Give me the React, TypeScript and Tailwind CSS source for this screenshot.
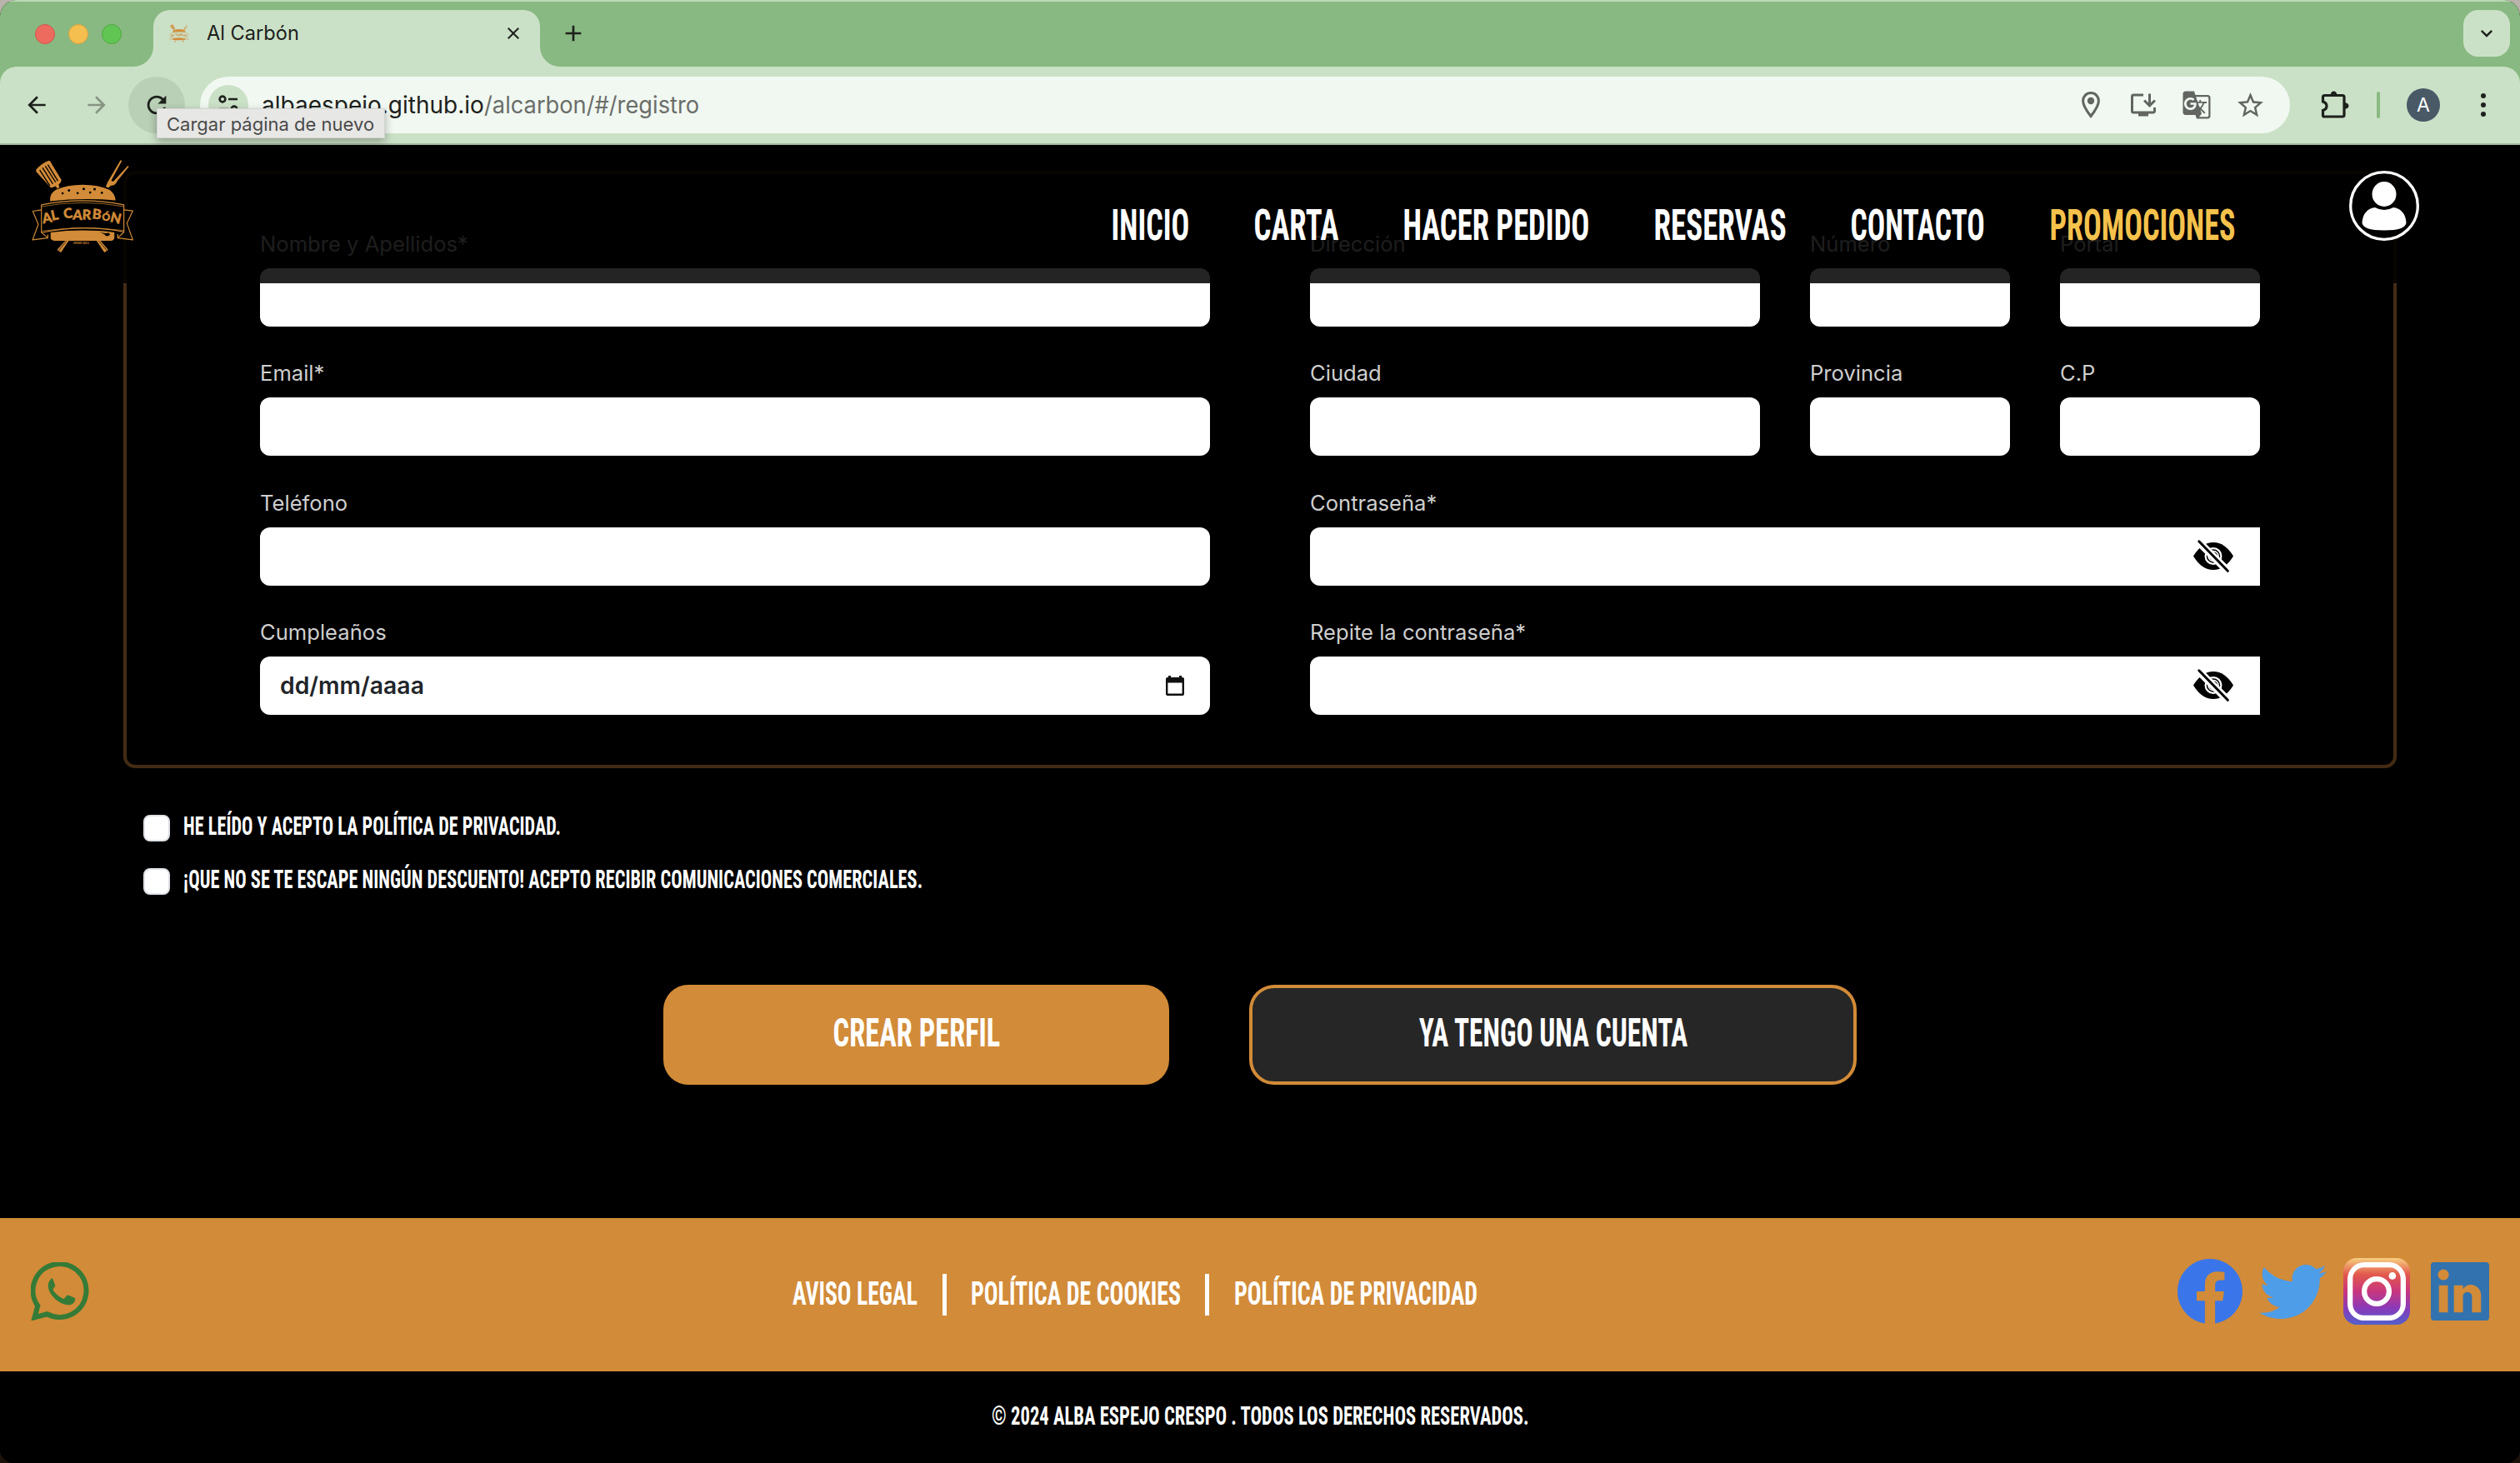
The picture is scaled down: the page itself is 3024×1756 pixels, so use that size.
import { useLayoutEffect, useRef, useState, type ReactNode } from "react";
import {
  MdArrowBack,
  MdArrowForward,
  MdClose,
  MdGTranslate,
  MdInstallDesktop,
  MdKeyboardArrowDown,
  MdAdd,
  MdRefresh,
  MdStarBorder,
} from "react-icons/md";

/** Text squeezed or stretched horizontally so that it fills its box. */
function Fit({
  children,
  box,
  className = "",
  bearing = 0,
}: {
  children: ReactNode;
  box: string;
  className?: string;
  bearing?: number;
}) {
  const outer = useRef<HTMLSpanElement>(null);
  const inner = useRef<HTMLSpanElement>(null);
  const [transform, setTransform] = useState("none");
  useLayoutEffect(() => {
    if (!outer.current || !inner.current) return;
    const side = parseFloat(getComputedStyle(inner.current).fontSize) * bearing;
    const k = outer.current.clientWidth / (inner.current.offsetWidth - 2 * side);
    setTransform(`translateX(${-side * k}px) scaleX(${k})`);
  }, [bearing]);
  return (
    <span ref={outer} className={`flex shrink-0 whitespace-nowrap ${box}`}>
      <span ref={inner} className={`shrink-0 origin-left leading-none ${className}`} style={{ transform }}>
        {children}
      </span>
    </span>
  );
}

/** Condensed display lettering used for navigation, buttons and footer. */
function Display({ children, box, className = "" }: { children: ReactNode; box: string; className?: string }) {
  return (
    <Fit box={box} bearing={0.04} className={`font-['Roboto',sans-serif] font-bold [font-stretch:75%] ${className}`}>
      {children}
    </Fit>
  );
}

function Logo({ className, ground = "#000" }: { className: string; ground?: string }) {
  const letters: [string, number, number, number][] = [
    ["A", 113, 290, -10],
    ["L", 141, 280, -12],
    ["C", 188, 274, -8],
    ["A", 219, 279, 4],
    ["R", 252, 279, 2],
    ["B", 287, 277, 6],
    ["Ó", 321, 283, 6],
    ["N", 353, 290, 14],
  ];
  return (
    <svg viewBox="55 65 368 335" className={className} fill="none">
      <g fill="#d28b38">
        <path d="M71 99Q92 76 117 67Q124 69 125 76L162 137Q162 145 152 153L155 163L147 168L141 159Q129 165 123 164L71 107Z" />
        <path d="M374 66L379 68L341 138Q345 146 352 138L400 86L404 89L364 138Q355 158 340 157L330 165L321 161L328 144Z" />
        <path d="M121 209Q119 186 142 172Q182 154 238 154Q295 154 334 172Q355 186 356 210Q240 200 121 213Z" />
        <path d="M123 325Q180 318 238 318Q300 318 352 325L352 345Q350 355 340 355L136 355Q124 354 123 345Z" />
        <path d="M177 354L189 354L160 397L146 388Z" />
        <path d="M287 354L301 354L330 388L316 397Z" />
      </g>
      <g stroke={ground} strokeWidth="4">
        <path d="M84 101L120 157M94 93L131 151M104 87L141 145M113 82L149 140" />
        <path d="M180 356L152 391M296 356L325 390" strokeWidth="2" />
      </g>
      <path d="M297 322Q318 332 331 326L337 333Q324 345 317 333Z" fill={ground} />
      <g fill={ground}>
        <circle cx="166" cy="185" r="4" />
        <circle cx="189" cy="174" r="4.500" />
        <circle cx="220" cy="184" r="4" />
        <circle cx="242" cy="169" r="4.500" />
        <circle cx="265" cy="182" r="4" />
        <circle cx="281" cy="170" r="4.500" />
        <circle cx="307" cy="183" r="4" />
      </g>
      <g stroke="#d28b38" strokeWidth="3.500" strokeLinejoin="round">
        <path d="M90 244L59 249L79 296L58 352L113 345L113 333" />
        <path d="M387 244L418 248L397 292L418 352L364 345L364 331" />
        <path d="M90 325L113 345M387 323L364 345" />
        <path d="M90 226Q238 196 386 226L386 323Q238 294 90 326Z" fill={ground} />
        <path d="M92 232Q238 205 384 232" strokeWidth="2" />
        <path d="M92 320Q238 300 384 318" strokeWidth="2" />
      </g>
      <g fill="#d28b38" stroke="#d28b38" strokeWidth="1.500" fontFamily="Lato, sans-serif" fontWeight="900" textAnchor="middle">
        {letters.map(([l, x, y, r], i) => (
          <text key={i} x={x} y={y} transform={`rotate(${r} ${x} ${y})`} fontSize={l === "Ó" ? 36 : 49}>
            {l}
          </text>
        ))}
      </g>
      <text x="233" y="366" fill="#d28b38" fontFamily="Inter, sans-serif" fontWeight="700" fontSize="9" textAnchor="middle">
        DESDE 2023
      </text>
    </svg>
  );
}

function TabFlare({ side }: { side: "left" | "right" }) {
  return (
    <svg
      viewBox="0 0 24 24"
      className={side === "left" ? "absolute bottom-0 -left-6 size-6" : "absolute bottom-0 -right-6 size-6 -scale-x-100"}
    >
      <path d="M24 0A24 24 0 0 1 0 24H24Z" fill="#cbe1c7" />
    </svg>
  );
}

function BrowserChrome() {
  return (
    <div className="h-[174px] shrink-0 bg-[#89b982] font-['Inter',sans-serif]">
      <div className="flex h-20 items-start border-t-2 border-[#bcd9b7] pr-3 pl-[42px]">
        <div className="flex gap-4 pt-[27px]">
          <span className="size-6 rounded-full border border-[#d5554a] bg-[#ec6a5e]" />
          <span className="size-6 rounded-full border border-[#d9a23f] bg-[#f4bf4f]" />
          <span className="size-6 rounded-full border border-[#4fa73f] bg-[#61c554]" />
        </div>
        <div className="relative mt-2.5 ml-[38px] flex h-[68px] w-[464px] items-start rounded-t-[20px] bg-[#cbe1c7] pl-[19px] text-[#1d211c]">
          <TabFlare side="left" />
          <TabFlare side="right" />
          <Logo className="mt-4 h-6 w-6" ground="#cbe1c7" />
          <Fit box="ml-[21px] mt-[16px] w-[111px]" className="text-[24px]">
            Al Carbón
          </Fit>
          <MdClose className="mt-4 ml-[245px] size-6" />
        </div>
        <MdAdd className="mt-[22px] ml-[24px] size-[32px] text-[#1d211c]" />
        <div className="grow" />
        <div className="mt-2.5 flex h-14 w-14 items-center justify-center rounded-[18px] bg-[#cbe1c7]">
          <MdKeyboardArrowDown className="size-7 text-[#1d211c]" />
        </div>
      </div>
      <div className="flex h-[94px] items-center rounded-t-[20px] border-b-2 border-[#a3b5a0] bg-[#cbe1c7] pl-[28px] text-[#1d211c]">
        <MdArrowBack className="size-8" />
        <MdArrowForward className="ml-10 size-8 text-[#869583]" />
        <div className="relative ml-[22px] flex size-[68px] items-center justify-center rounded-full bg-[#b9cfb6]">
          <MdRefresh className="size-[34px]" />
          <div className="absolute top-[38px] left-[34px] z-20 flex h-9 w-[274px] items-center border border-[#d4d4d2] bg-[#e7e7e5] pt-px pl-[11px] shadow-[0_4px_10px_rgba(0,0,0,0.3)]">
            <Fit box="w-[249px]" className="text-[22px] text-[#4a4a4a]">
              Cargar página de nuevo
            </Fit>
          </div>
        </div>
        <div className="ml-[18px] flex h-[68px] w-[2508px] items-center rounded-full bg-[#f1f8f1] pl-2.5">
          <div className="flex size-12 items-center justify-center rounded-full bg-[#cbe1c7]">
            <svg viewBox="0 0 24 24" className="size-6" fill="none" stroke="#1d211c" strokeWidth="2.600">
              <circle cx="5" cy="5" r="3.400" />
              <path d="M12 5H23M1 17H12" />
              <circle cx="19" cy="17" r="3.400" />
            </svg>
          </div>
          <Fit box="ml-[16px] w-[267px]" className="text-[28px]">
            albaespejo.github.io
          </Fit>
          <Fit box="w-[258px]" className="text-[28px] text-[#6a6e6a]">
            /alcarbon/#/registro
          </Fit>
          <div className="grow" />
          <div className="flex items-center pr-[25px] text-[#626562]">
            <svg viewBox="0 0 24 34" className="mr-[33px] h-[34px] w-6" fill="none">
              <path d="M12 2.600C6.500 2.600 2.600 6.900 2.600 12C2.600 18.500 12 30.500 12 30.500C12 30.500 21.400 18.500 21.400 12C21.400 6.900 17.500 2.600 12 2.600Z" stroke="#626562" strokeWidth="3" />
              <circle cx="12" cy="12" r="4.200" fill="#626562" />
            </svg>
            <MdInstallDesktop className="mr-[28px] size-[36px]" />
            <MdGTranslate className="mr-[28px] size-[36px]" />
            <MdStarBorder className="mr-[4px] size-[37px]" />
          </div>
        </div>
        <svg viewBox="0 0 36 36" className="ml-[36px] size-9" fill="none">
          <path d="M5 6.500H27Q29 6.500 29 8.500V30Q29 32 27 32H5Q3.500 32 3.500 30.500V24.500Q8 23 8 19.200Q8 15.500 3.500 14V8.500Q3.500 6.500 5.500 6.500" stroke="#1d211c" strokeWidth="3.200" />
          <path d="M12.500 6.500Q13 1.500 16.500 1.500Q20 1.500 20.500 6.500ZM29 15Q34.500 15.500 34.500 19Q34.500 22.500 29 23Z" fill="#1d211c" />
        </svg>
        <span className="ml-8 h-8 w-1 rounded-full bg-[#89b982]" />
        <span className="ml-8 flex size-10 items-center justify-center rounded-full bg-[#495966] text-[23px] leading-none text-white">A</span>
        <div className="ml-[49px] flex flex-col gap-[5px]">
          <span className="size-1.5 rounded-full bg-[#1d211c]" />
          <span className="size-1.5 rounded-full bg-[#1d211c]" />
          <span className="size-1.5 rounded-full bg-[#1d211c]" />
        </div>
      </div>
    </div>
  );
}

function SiteHeader() {
  return (
    <header className="absolute inset-x-0 top-0 z-10 flex h-[166px] items-start bg-black/86">
      <Logo className="mt-[18px] ml-[38px] h-[112px] w-[123px]" />
      <nav className="mt-[71px] ml-[1174px] flex gap-20 text-[51.5px] text-white">
        <Display box="w-[91px]">INICIO</Display>
        <Display box="w-[99px]">CARTA</Display>
        <Display box="w-[221px]">HACER PEDIDO</Display>
        <Display box="w-[156px]">RESERVAS</Display>
        <Display box="w-[158px]">CONTACTO</Display>
        <Display box="ml-px w-[220px]" className="text-[#f5c24c]">
          PROMOCIONES
        </Display>
      </nav>
      <svg viewBox="0 0 84 84" className="mt-[31px] ml-[138px] size-[84px]">
        <circle cx="42" cy="42" r="40.300" fill="none" stroke="#fff" strokeWidth="3.300" />
        <ellipse cx="42" cy="28" rx="14.500" ry="15" fill="#fff" />
        <path d="M31 44Q42 50 53 44Q67 46 68.500 62Q68 71.500 42 71.500Q16 71.500 15.500 62Q17 46 31 44Z" fill="#fff" />
      </svg>
    </header>
  );
}

function Field({ label, className = "", children }: { label: string; className?: string; children?: ReactNode }) {
  return (
    <label className={`block ${className}`}>
      <span className="mb-2.5 block h-[38px] text-[25.6px] leading-[38px] text-[#cfcfcf]">{label}</span>
      {children ?? <span className="block h-[70px] rounded-[12px] bg-white" />}
    </label>
  );
}

function EyeOff() {
  return (
    <svg viewBox="0 0 48 48" className="size-12">
      <path d="M0 23.500Q10 7 24 7Q38 7 48 23.500Q38 40 24 40Q10 40 0 23.500Z" />
      <circle cx="24" cy="23.500" r="9.400" fill="none" stroke="#fff" strokeWidth="2.200" />
      <circle cx="24" cy="23.500" r="6" fill="none" stroke="#fff" strokeWidth="1.600" />
      <path d="M4 4L44 44" stroke="#fff" strokeWidth="9" />
      <path d="M6.800 5.800L41.300 41.300" stroke="#000" strokeWidth="3" strokeLinecap="round" />
    </svg>
  );
}

function PasswordBox() {
  return (
    <span className="flex h-[70px] items-center justify-end rounded-l-[12px] bg-white pr-8">
      <EyeOff />
    </span>
  );
}

function RegisterForm() {
  return (
    <form className="flex flex-col">
      <div className="mt-[31px] ml-[148px] grid h-[717px] w-[2728px] grid-cols-2 gap-x-[120px] rounded-[14px] border-4 border-[#432b13] px-40 pt-[65px] font-['Inter',sans-serif]">
        <div className="flex flex-col gap-[37.4px]">
          <Field label="Nombre y Apellidos*" />
          <Field label="Email*" />
          <Field label="Teléfono" />
          <Field label="Cumpleaños">
            <span className="flex h-[70px] items-center justify-between rounded-[12px] bg-white pr-[30px] pl-6">
              <Fit box="w-[173px]" className="text-[28px] font-semibold text-[#212529]">
                dd/mm/aaaa
              </Fit>
              <svg viewBox="0 0 24 26" className="h-[26px] w-6">
                <path d="M4 1H7V3H17V1H20V3H21Q23 3 23 5V23Q23 25 21 25H3Q1 25 1 23V5Q1 3 3 3H4ZM3.400 9.500V22.600H20.600V9.500Z" fillRule="evenodd" fill="#111" />
              </svg>
            </span>
          </Field>
        </div>
        <div className="flex flex-col gap-[37.4px]">
          <div className="flex gap-[60px]">
            <Field label="Dirección" className="w-[540px]" />
            <Field label="Número" className="w-[240px]" />
            <Field label="Portal" className="w-[240px]" />
          </div>
          <div className="flex gap-[60px]">
            <Field label="Ciudad" className="w-[540px]" />
            <Field label="Provincia" className="w-[240px]" />
            <Field label="C.P" className="w-[240px]" />
          </div>
          <Field label="Contraseña*">
            <PasswordBox />
          </Field>
          <Field label="Repite la contraseña*">
            <PasswordBox />
          </Field>
        </div>
      </div>

      <div className="mt-14 ml-[172px] flex flex-col gap-8 text-[31.5px] text-white">
        <div className="flex h-8 items-center gap-[17px]">
          <span className="size-8 rounded-[8px] border-2 border-[#dee2e6] bg-white" />
          <Display box="-mt-[4px] w-[451px]">HE LEÍDO Y ACEPTO LA POLÍTICA DE PRIVACIDAD.</Display>
        </div>
        <div className="flex h-8 items-center gap-[17px]">
          <span className="size-8 rounded-[8px] border-2 border-[#dee2e6] bg-white" />
          <Display box="-mt-[4px] w-[885px]">¡QUE NO SE TE ESCAPE NINGÚN DESCUENTO! ACEPTO RECIBIR COMUNICACIONES COMERCIALES.</Display>
        </div>
      </div>

      <div className="mt-[108px] ml-[796px] flex gap-24 text-[48px] text-white">
        <button type="button" className="flex h-[120px] w-[607px] items-center justify-center rounded-[30px] bg-[#d28b38] pb-1">
          <Display box="w-[198px]">CREAR PERFIL</Display>
        </button>
        <button type="button" className="flex h-[120px] w-[729px] items-center justify-center rounded-[30px] border-4 border-[#d28b38] bg-[#262626] pb-1">
          <Display box="w-[320px]">YA TENGO UNA CUENTA</Display>
        </button>
      </div>
    </form>
  );
}

function SocialLinks() {
  return (
    <div className="flex items-center">
      <svg viewBox="2 2 20 20" className="size-[78px]" fill="#3a76e9">
        <path d="M22 12c0-5.520-4.480-10-10-10S2 6.480 2 12c0 4.990 3.660 9.130 8.440 9.880V14.890H7.900V12h2.540V9.800c0-2.510 1.490-3.890 3.780-3.890 1.090 0 2.240.200 2.240.200v2.460h-1.260c-1.240 0-1.630.770-1.630 1.560V12h2.780l-.450 2.890h-2.330v6.990C18.340 21.130 22 16.990 22 12z" />
      </svg>
      <svg viewBox="2 4 20.46 17" preserveAspectRatio="none" className="ml-[22px] h-[65px] w-[79px] overflow-visible" fill="#4e9de8">
        <path d="M22.460 6c-.770.350-1.600.580-2.460.690.880-.530 1.560-1.370 1.880-2.380-.830.500-1.750.850-2.720 1.050C18.370 4.500 17.260 4 16 4c-2.350 0-4.270 1.920-4.270 4.290 0 .340.040.670.110.980C8.280 9.090 5.110 7.380 3 4.790c-.370.630-.580 1.370-.580 2.150 0 1.490.750 2.810 1.910 3.560-.710 0-1.370-.200-1.950-.500v.030c0 2.080 1.480 3.820 3.440 4.210a4.220 4.220 0 0 1-1.930.070 4.280 4.280 0 0 0 4 2.980 8.521 8.521 0 0 1-5.330 1.840c-.340 0-.680-.020-1.020-.060C3.440 20.290 5.700 21 8.120 21 16 21 20.330 14.460 20.330 8.790c0-.190 0-.370-.010-.560.840-.600 1.560-1.360 2.140-2.230z" />
      </svg>
      <span className="ml-5 flex size-20 items-center justify-center rounded-[16px] bg-linear-[180deg,#f7d080_0%,#e2574c_25%,#c8367f_50%,#8a3ab9_75%,#5160cc_100%]">
        <svg viewBox="2 2 20 20" className="size-[70px]" fill="#fff">
          <path d="M7.800 2h8.400C19.400 2 22 4.600 22 7.800v8.400a5.800 5.800 0 0 1-5.800 5.800H7.800C4.600 22 2 19.400 2 16.200V7.800A5.800 5.800 0 0 1 7.800 2m-.2 1.800A3.800 3.800 0 0 0 3.800 7.600v8.800C3.800 18.500 5.500 20.200 7.600 20.200h8.800a3.800 3.800 0 0 0 3.800-3.800V7.600C20.200 5.500 18.500 3.800 16.400 3.800H7.600m9.800 1.650a1.250 1.250 0 0 1 0 2.500 1.250 1.250 0 0 1 0-2.500M12 6.850a5.150 5.150 0 0 1 0 10.300 5.150 5.150 0 0 1 0-10.300m0 1.800a3.350 3.350 0 0 0 0 6.700 3.350 3.350 0 0 0 0-6.700z" />
        </svg>
      </span>
      <svg viewBox="3 3 18 18" className="ml-[25px] size-[70px]" fill="#3272ae">
        <path d="M20 3a1 1 0 0 1 1 1v16a1 1 0 0 1-1 1H4a1 1 0 0 1-1-1V4a1 1 0 0 1 1-1h16m-1.500 15.500v-5.300a3.260 3.260 0 0 0-3.260-3.260c-.850 0-1.840.520-2.320 1.300v-1.110h-2.790v8.370h2.790v-4.930c0-.770.620-1.400 1.390-1.400a1.400 1.400 0 0 1 1.400 1.400v4.930h2.790M6.880 8.560a1.680 1.680 0 0 0 1.680-1.680c0-.930-.750-1.690-1.680-1.690a1.690 1.690 0 0 0-1.690 1.690c0 .930.760 1.680 1.690 1.680m1.390 9.940v-8.370H5.500v8.370h2.770z" fillRule="evenodd" />
      </svg>
    </div>
  );
}

function Footer() {
  return (
    <footer className="mt-40">
      <div className="flex h-[184px] items-center bg-[#d28b38] px-[37px] pb-2 text-[39.5px] text-white">
        <svg viewBox="110 164 212 212" className="size-[70.6px]">
          <path d="M135 321L123.500 363L169 351A96 96 0 1 0 135 321Z" fill="none" stroke="#357b37" strokeWidth="18" />
          <path d="M178 221q8-1 11 3l9 23q0 4-9 15q12 22 40 34l10-11q4-4 8-2l22 10q2 3-1 12q-8 15-28 13q-25-4-45-24q-20-20-23-43q1-22 16-30z" fill="#357b37" />
        </svg>
        <div className="mt-[8px] ml-[844px] flex items-center">
          <Display box="-mt-[3px] w-[148px]">AVISO LEGAL</Display>
          <span className="ml-[31px] h-[50px] w-[5px] bg-white" />
          <Display box="-mt-[3px] ml-[30px] w-[250px]">POLÍTICA DE COOKIES</Display>
          <span className="ml-[30px] h-[50px] w-[5px] bg-white" />
          <Display box="-mt-[3px] ml-[31px] w-[290px]">POLÍTICA DE PRIVACIDAD</Display>
        </div>
        <div className="grow" />
        <SocialLinks />
      </div>
      <div className="flex h-[108px] items-center justify-center text-[31.5px] text-white">
        <Display box="w-[643px]">© 2024 ALBA ESPEJO CRESPO . TODOS LOS DERECHOS RESERVADOS.</Display>
      </div>
    </footer>
  );
}

export default function App() {
  return (
    <div className="h-[1756px] w-[3024px] overflow-hidden bg-[linear-gradient(#b9b3ab_50%,#1c120a_50%)]">
      <div className="flex h-full flex-col overflow-hidden rounded-t-[20px] rounded-b-[16px] bg-black">
        <BrowserChrome />
        <main className="relative grow">
          <SiteHeader />
          <RegisterForm />
          <Footer />
        </main>
      </div>
    </div>
  );
}
